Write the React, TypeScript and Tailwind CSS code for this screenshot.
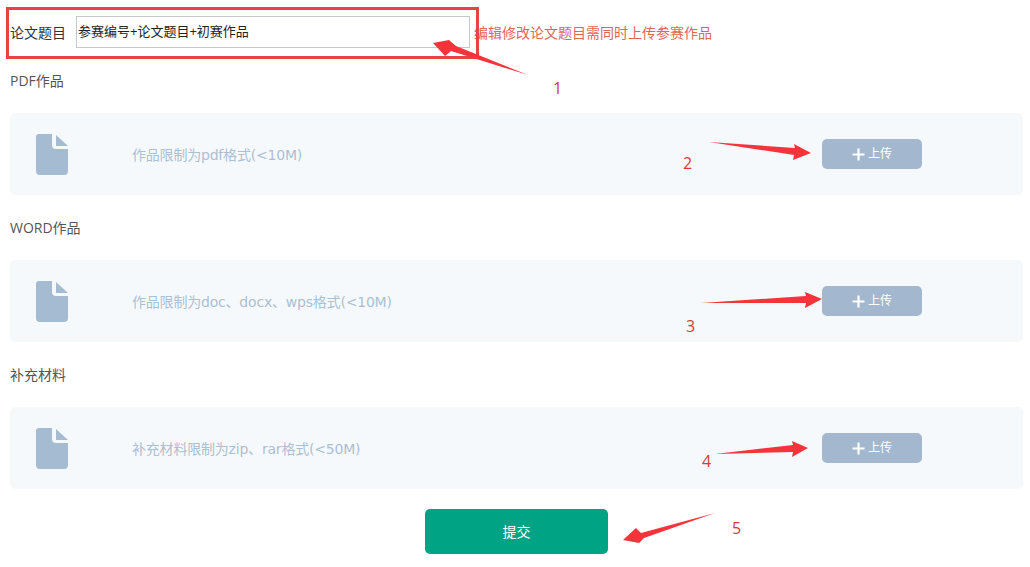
const font = { fontFamily: '"Open Sans", "Noto Sans CJK SC", sans-serif' };

function DocIcon() {
  return (
    <svg width="32" height="41" viewBox="0 0 32 41" className="shrink-0">
      <path d="M3 0H16V11a4 4 0 0 0 4 4H32V37a4 4 0 0 1-4 4H4a4 4 0 0 1-4-4V3a3 3 0 0 1 3-3Z" fill="#a5bbd2" />
      <path d="M20 1L32 12H20Z" fill="#a5bbd2" />
    </svg>
  );
}

function Section({ label, hint }: { label: string; hint: string }) {
  return (
    <section className="mt-[18px]">
      <div className="h-[30px] leading-[30px] text-[14px] text-[#555]">{label}</div>
      <div className="mt-[17px] h-[82px] rounded-[5px] bg-[#f6f9fc] flex items-center pl-[26px] pr-[101px]">
        <DocIcon />
        <div
          className="ml-[64px] pt-[2px] flex-1 text-[14px] tracking-[-0.2px] text-[#abbfd2]"
          style={{ fontFamily: '"DejaVu Sans", "Noto Sans CJK SC", sans-serif' }}
        >
          {hint}
        </div>
        <button className="w-[100px] h-[30px] rounded-[5px] bg-[#a3b8ce] text-white text-[12px] flex items-center justify-center gap-[3px]">
          <svg width="13" height="13" viewBox="0 0 13 13">
            <path d="M6.5 0.5V12.5M0.5 6.5H12.5" stroke="#fff" strokeWidth="2.2" fill="none" />
          </svg>
          <span>上传</span>
        </button>
      </div>
    </section>
  );
}

const arrows = [
  "528,75 456,46 449,40 433,43 445,56 451,51",
  "709,142 795,148 794,144 811,153 793,160 794,155",
  "701,303 806,296 805,292 822,299 805,308 806,303",
  "715,454 793,445 792,441 808,448 792,457 793,452",
  "715,513 641,533 636,528 623,540 639,543 644,538",
];

const numbers = [
  { n: "1", cls: "left-[553px] top-[77px]" },
  { n: "2", cls: "left-[683px] top-[152px]" },
  { n: "3", cls: "left-[686px] top-[315px]" },
  { n: "4", cls: "left-[702px] top-[450px]" },
  { n: "5", cls: "left-[732px] top-[517px]" },
];

export default function App() {
  return (
    <div className="relative w-[1030px] h-[567px] overflow-hidden bg-white pl-[10px] pr-[7px] pt-[16px]" style={font}>
      <div className="flex items-center h-[32px]">
        <span className="w-[66px] text-[14px] text-[#333]">论文题目</span>
        <div className="w-[394px] h-[32px] border border-[#c4c7cc] pl-[1px] flex items-center text-[13px] text-[#222]">
          参赛编号+论文题目+初赛作品
        </div>
        <span className="ml-[4px] text-[14px] text-[#e2655a]">编辑修改论文题目需同时上传参赛作品</span>
      </div>

      <Section label="PDF作品" hint="作品限制为pdf格式(<10M)" />
      <Section label="WORD作品" hint="作品限制为doc、docx、wps格式(<10M)" />
      <Section label="补充材料" hint="补充材料限制为zip、rar格式(<50M)" />

      <div className="mt-[20px] pl-[415px]">
        <button className="w-[183px] h-[45px] rounded-[5px] bg-[#00a383] text-white text-[14px]">提交</button>
      </div>

      <div className="absolute left-[6px] top-[7px] w-[473px] h-[52px] border-[3px] border-[#ea4046]" />
      <svg className="absolute left-0 top-0" width="1030" height="567">
        {arrows.map((p) => (
          <polygon key={p} points={p} fill="#f4343a" />
        ))}
      </svg>
      {numbers.map((x) => (
        <span key={x.n} className={`absolute text-[16px] leading-[22px] text-[#d9383c] ${x.cls}`}>
          {x.n}
        </span>
      ))}
    </div>
  );
}
